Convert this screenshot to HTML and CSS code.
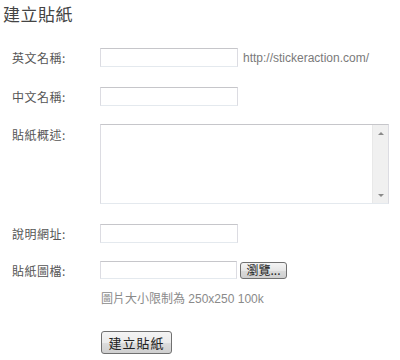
FILE: index.html
```html
<!DOCTYPE html>
<html lang="zh-Hant">
<head>
<meta charset="utf-8">
<title>建立貼紙</title>
<link rel="stylesheet" href="styles.css">
</head>
<body>
<h1 class="title">建立貼紙</h1>
<form class="form">
  <div class="row row-first">
    <label class="label">英文名稱:</label>
    <div class="field">
      <input class="text" type="text">
      <span class="url">http://stickeraction.com/</span>
    </div>
  </div>
  <div class="row">
    <label class="label">中文名稱:</label>
    <div class="field"><input class="text" type="text"></div>
  </div>
  <div class="row row-area">
    <label class="label label-area">貼紙概述:</label>
    <div class="field">
      <div class="area">
        <textarea class="area-input"></textarea>
        <div class="scrollbar">
          <span class="arrow arrow-up"></span>
          <span class="arrow arrow-down"></span>
        </div>
      </div>
    </div>
  </div>
  <div class="row">
    <label class="label">說明網址:</label>
    <div class="field"><input class="text" type="text"></div>
  </div>
  <div class="row row-file">
    <label class="label">貼紙圖檔:</label>
    <div class="field">
      <input class="text text-file" type="text">
      <button type="button" class="browse">瀏覽...</button>
    </div>
  </div>
  <div class="hint">圖片大小限制為 250x250 100k</div>
  <div class="actions">
    <button type="button" class="submit">建立貼紙</button>
  </div>
</form>
</body>
</html>
```
FILE: styles.css
```css
html, body {
  margin: 0;
  padding: 0;
  background: #fff;
}
body {
  font-family: "Noto Sans CJK TC", "Liberation Sans", sans-serif;
  font-size: 12px;
  color: #555;
}
.title {
  margin: 0;
  padding: 3px 0 0 3px;
  font-size: 17px;
  line-height: 22px;
  font-weight: normal;
  color: #444;
  letter-spacing: 0.5px;
}
.form {
  padding: 23px 0 0 12px;
}
.row {
  display: flex;
  align-items: flex-start;
  margin-bottom: 18px;
}
.row-first,
.row-area {
  margin-bottom: 20px;
}
.row-file {
  margin-bottom: 0;
}
.label {
  width: 88px;
  flex: none;
  line-height: 17px;
  padding-top: 1px;
  color: #555;
  letter-spacing: 0.5px;
}
.label-area {
  padding-top: 2px;
}
.field {
  display: flex;
  align-items: center;
}
.text {
  box-sizing: border-box;
  width: 138px;
  height: 19px;
  margin: 0;
  padding: 1px 3px;
  border: 1px solid #dcdce2;
  border-top-color: #c6c6ca;
  border-bottom-color: #e4e9ee;
  background: #fff;
  font: 12px "Liberation Sans", sans-serif;
  outline: none;
}
.text-file {
  width: 137px;
  height: 18px;
}
.url {
  margin-left: 5px;
  font-family: "Liberation Sans", sans-serif;
  font-size: 12px;
  line-height: 14px;
  color: #7a7a7a;
}
.area {
  box-sizing: border-box;
  width: 289px;
  height: 80px;
  display: flex;
  border: 1px solid #dcdce2;
  border-top-color: #c6c6ca;
  border-bottom-color: #e4e9ee;
  background: #fff;
}
.area-input {
  flex: 1;
  border: none;
  margin: 0;
  padding: 2px;
  resize: none;
  overflow: hidden;
  outline: none;
  font: 12px "Liberation Sans", sans-serif;
}
.scrollbar {
  width: 16px;
  flex: none;
  background: #f0f0f0;
  border-left: 1px solid #e8e8e8;
  display: flex;
  flex-direction: column;
  justify-content: space-between;
  align-items: center;
  padding: 7px 0 6px;
  box-sizing: border-box;
}
.arrow {
  width: 0;
  height: 0;
  border-left: 3px solid transparent;
  border-right: 3px solid transparent;
}
.arrow-up {
  border-bottom: 3px solid #8a8a8a;
}
.arrow-down {
  border-top: 3px solid #8a8a8a;
}
.browse {
  box-sizing: border-box;
  margin-left: 3px;
  width: 47px;
  height: 17px;
  padding: 0;
  border: 1px solid #707070;
  border-radius: 3px;
  background: linear-gradient(#f4f4f4, #e6e6e6 50%, #dadada 51%, #cfcfcf);
  font: 12px "Noto Sans CJK TC", sans-serif;
  line-height: 14px;
  color: #222;
}
.hint {
  margin-left: 89px;
  margin-top: 12px;
  color: #8a8a8a;
  font-family: "Liberation Sans", "Noto Sans CJK TC", sans-serif;
  font-size: 12px;
  line-height: 16px;
}
.actions {
  margin: 24px 0 0 89px;
}
.submit {
  box-sizing: border-box;
  width: 71px;
  height: 23px;
  padding: 0;
  border: 1px solid #707070;
  border-radius: 3px;
  background: linear-gradient(#f4f4f4, #ebebeb 50%, #dddddd 51%, #cfcfcf);
  font: 13px "Noto Sans CJK TC", sans-serif;
  line-height: 19px;
  color: #222;
  letter-spacing: 1px;
}
```
